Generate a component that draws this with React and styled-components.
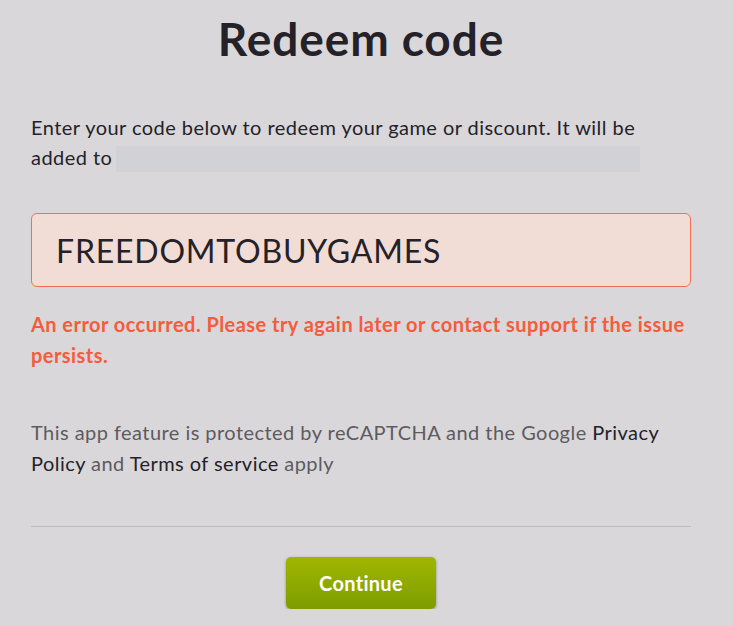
import styled, { createGlobalStyle } from "styled-components"

const GlobalStyle = createGlobalStyle`
  html, body {
    margin: 0;
    padding: 0;
    background: #d9d7da;
  }
  body {
    font-family: Lato, "Noto Sans", sans-serif;
    color: #242228;
  }
`

const Page = styled.div`
  width: 660px;
  padding: 12px 31px 0;
  display: flex;
  flex-direction: column;
`

const Title = styled.h1`
  margin: 0;
  font-size: 46px;
  line-height: 53px;
  font-weight: 700;
  letter-spacing: 0.9px;
  text-align: center;
  color: #242228;
`

const Intro = styled.p`
  margin: 47px 0 0;
  font-size: 20px;
  line-height: 30px;
  letter-spacing: 0.45px;
`

const Target = styled.span`
  white-space: nowrap;
`

const Redacted = styled.span`
  display: inline-block;
  width: 524px;
  height: 26px;
  margin-left: 4px;
  vertical-align: -7px;
  background: #d2d1d5;
`

const CodeInput = styled.input`
  box-sizing: border-box;
  margin-top: 41px;
  width: 100%;
  height: 74px;
  padding: 0 24px;
  border: 1px solid #f26f52;
  border-radius: 6px;
  background: #f2dcd6;
  font-family: Lato, "Noto Sans", sans-serif;
  font-size: 32px;
  letter-spacing: 0.8px;
  color: #242228;
  outline: none;
`

const ErrorText = styled.p`
  margin: 22px 0 0;
  font-size: 20px;
  line-height: 31px;
  font-weight: 700;
  letter-spacing: 0.45px;
  color: #f65b3b;
`

const Notice = styled.p`
  margin: 46px 0 0;
  font-size: 20px;
  line-height: 31px;
  letter-spacing: 0.45px;
  color: #5d5b60;
`

const NoticeLink = styled.a`
  color: #242228;
  text-decoration: none;
`

const Divider = styled.hr`
  margin: 47px 0 0;
  border: none;
  border-top: 1px solid #bdbcbf;
`

const Actions = styled.div`
  display: flex;
  justify-content: center;
  padding-top: 30px;
`

const Button = styled.button`
  width: 150px;
  height: 52px;
  border: none;
  border-radius: 5px;
  background: linear-gradient(#a0b600, #7e9c00);
  box-shadow: 0 1px 3px rgba(0, 0, 0, 0.35);
  color: #fff;
  font-family: Lato, "Noto Sans", sans-serif;
  font-size: 20px;
  font-weight: 700;
  letter-spacing: 0.3px;
  cursor: pointer;
`

export default function App() {
  return (
    <>
      <GlobalStyle />
      <Page>
        <Title>Redeem code</Title>
        <Intro>
          Enter your code below to redeem your game or discount. It will be{" "}
          <Target>
            added to
            <Redacted />
          </Target>
        </Intro>
        <CodeInput defaultValue="FREEDOMTOBUYGAMES" />
        <ErrorText>
          An error occurred. Please try again later or contact support if the issue persists.
        </ErrorText>
        <Notice>
          This app feature is protected by reCAPTCHA and the Google{" "}
          <NoticeLink href="#">Privacy Policy</NoticeLink> and{" "}
          <NoticeLink href="#">Terms of service</NoticeLink> apply
        </Notice>
        <Divider />
        <Actions>
          <Button>Continue</Button>
        </Actions>
      </Page>
    </>
  )
}
